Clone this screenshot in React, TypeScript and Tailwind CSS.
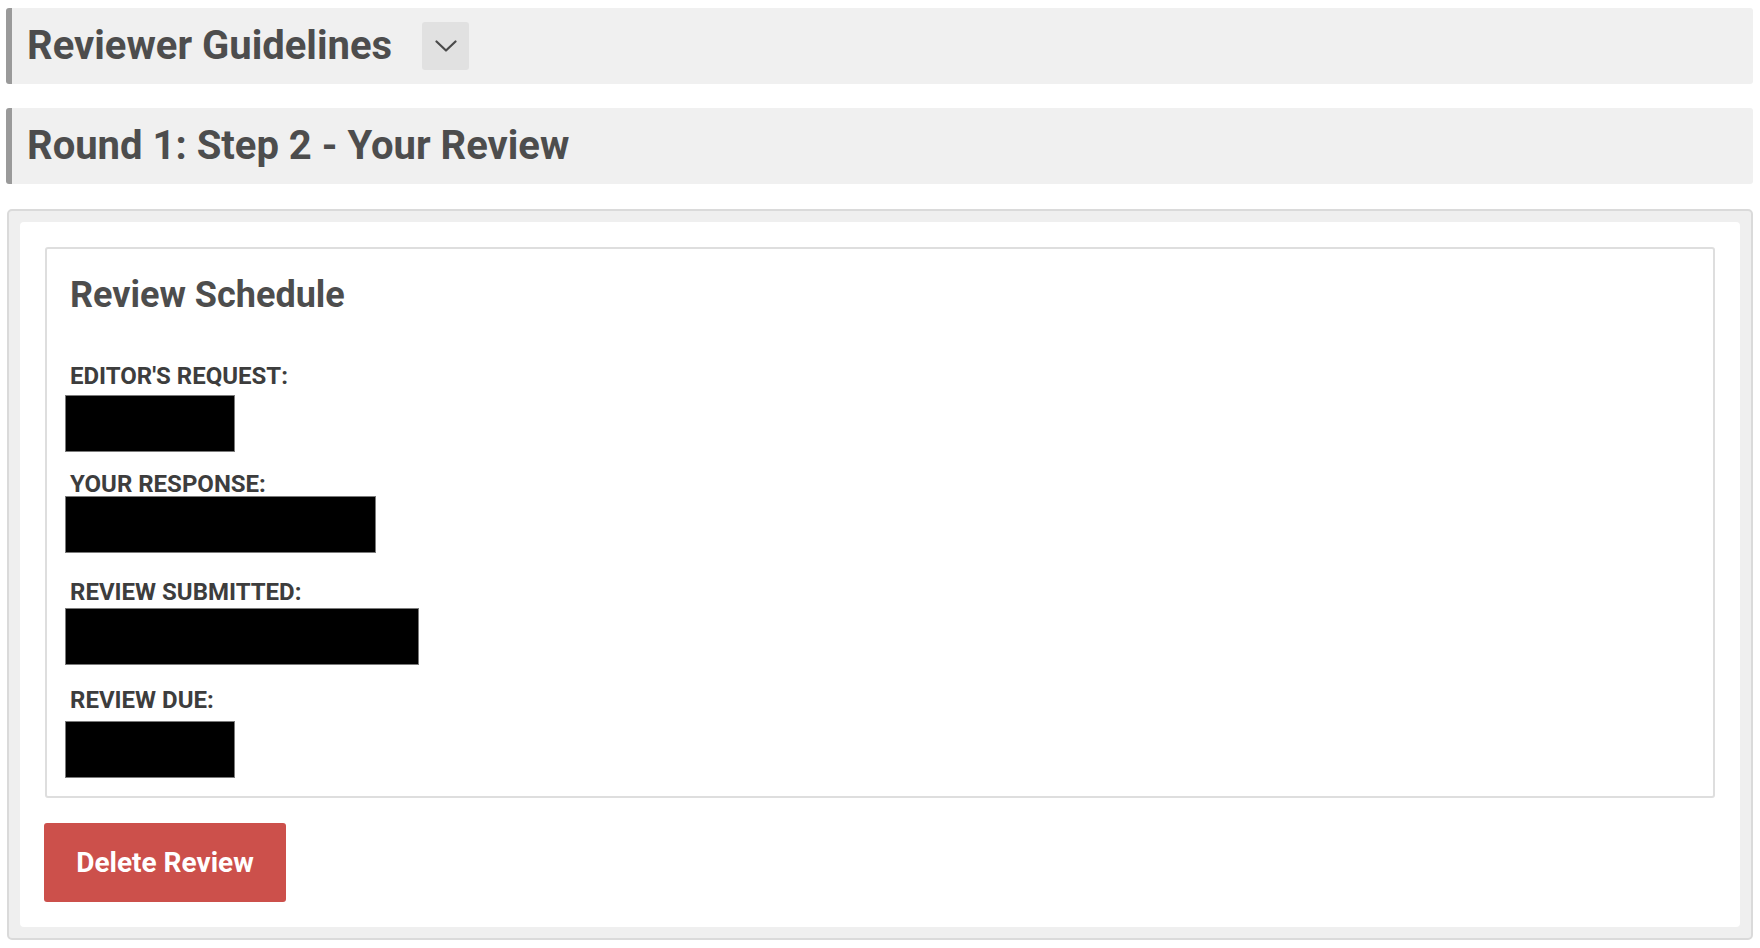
import React from 'react';

const font = { fontFamily: 'Roboto, "Noto Sans", Arial, sans-serif' };

function SectionBar({ title, children }: { title: string; children?: React.ReactNode }) {
  return (
    <div className="flex h-[76px] items-center rounded-[3px] border-l-[6px] border-[#9a9a9a] bg-[#f0f0f0] pl-[15px]">
      <h2 className="text-[40px] font-bold leading-none text-[#4d4d4d]">{title}</h2>
      {children}
    </div>
  );
}

// redacted value (black block over the date)
function Redacted({ w }: { w: string }) {
  return <div className={`h-[57px] border border-[#7a7a7a] bg-black ${w}`} />;
}

export default function App() {
  return (
    <div className="min-h-screen bg-white pl-[6px] pr-[7px] pt-[8px]" style={font}>
      <SectionBar title="Reviewer Guidelines">
        <button className="ml-[30px] flex h-[48px] w-[47px] items-center justify-center rounded-[3px] bg-[#e1e1e1]">
          <svg width="22" height="12" viewBox="0 0 22 12" fill="none">
            <polyline points="1.5,1.5 11,10.5 20.5,1.5" stroke="#4a4a4a" strokeWidth="2.2" strokeLinecap="round" strokeLinejoin="round" />
          </svg>
        </button>
      </SectionBar>

      <div className="mt-[24px]">
        <SectionBar title="Round 1: Step 2 - Your Review" />
      </div>

      {/* outer panel */}
      <div className="ml-[1px] mt-[25px] rounded-[5px] border-2 border-[#dadada] bg-[#efefef] p-[11px]">
        <div className="rounded-[4px] bg-white px-[25px] pb-[25px] pt-[25px]">
          <div className="rounded-[3px] border-2 border-[#dedede] pb-[18px] pl-[18px] pt-[26px]">
            <h3 className="ml-[5px] text-[36px] font-bold leading-[40px] text-[#4d4d4d]">Review Schedule</h3>

            <div className="ml-[5px] mt-[49px] text-[24px] font-bold leading-[24px] text-[#3d3d3d]">EDITOR'S REQUEST:</div>
            <div className="mt-[7px]">
              <Redacted w="w-[170px]" />
            </div>

            <div className="ml-[5px] mt-[20px] text-[24px] font-bold leading-[24px] text-[#3d3d3d]">YOUR RESPONSE:</div>
            <Redacted w="w-[311px]" />

            <div className="ml-[5px] mt-[27px] text-[24px] font-bold leading-[24px] text-[#3d3d3d]">REVIEW SUBMITTED:</div>
            <div className="mt-[4px]">
              <Redacted w="w-[354px]" />
            </div>

            <div className="ml-[5px] mt-[23px] text-[24px] font-bold leading-[24px] text-[#3d3d3d]">REVIEW DUE:</div>
            <div className="mt-[9px]">
              <Redacted w="w-[170px]" />
            </div>
          </div>

          <button className="-ml-[1px] mt-[25px] flex h-[79px] w-[242px] items-center justify-center rounded-[3px] bg-[#cc504b] text-[28px] font-bold text-white">
            Delete Review
          </button>
        </div>
      </div>
    </div>
  );
}
